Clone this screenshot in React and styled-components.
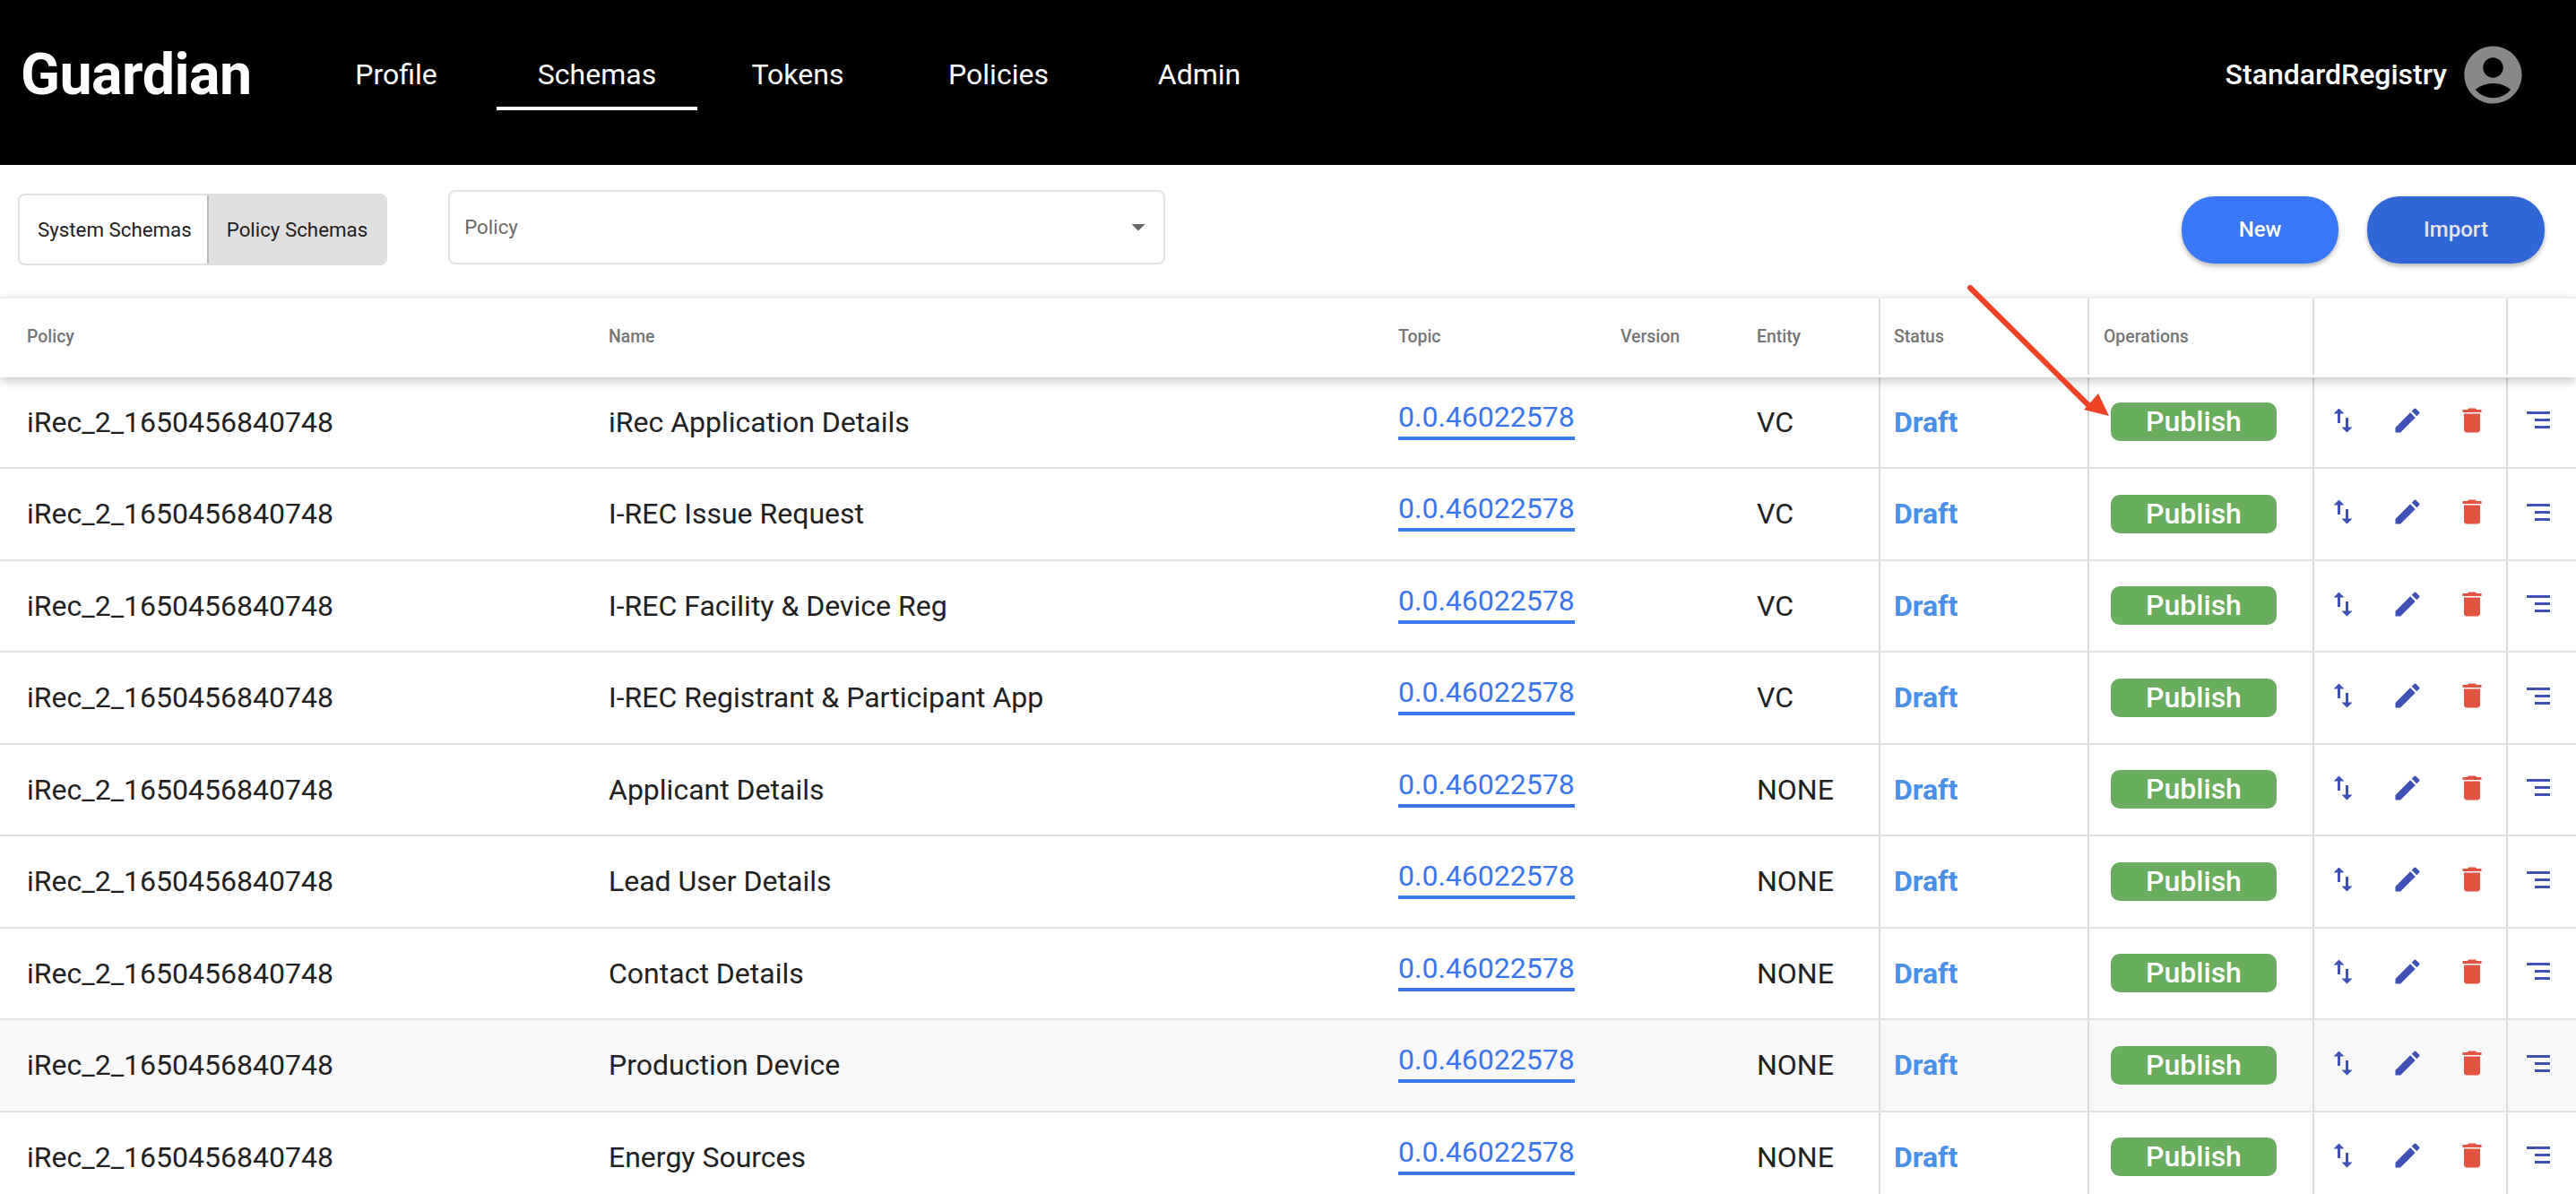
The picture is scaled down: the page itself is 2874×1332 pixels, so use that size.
import styled, { createGlobalStyle } from 'styled-components';
import { MdAccountCircle, MdArrowDropDown, MdDelete, MdEdit, MdSwapVert } from 'react-icons/md';

const columns = '649px 881px 248px 152px 166px 233px 251px 216px 78px';

const GlobalStyle = createGlobalStyle`
  html, body {
    height: 100%;
    margin: 0;
    overflow: hidden;
    background: #fff;
  }

  body {
    color: #212121;
    font-family: Roboto, "Liberation Sans", sans-serif;
  }

  * {
    box-sizing: border-box;
  }
`;

const Page = styled.div`
  height: 1332px;
  overflow: hidden;
  position: relative;
  width: 2874px;
`;

const Header = styled.header`
  align-items: center;
  background: #000;
  color: #fff;
  display: flex;
  height: 184px;
  padding: 0 54px 18px 23px;
`;

const Logo = styled.div`
  font-size: 64.5px;
  font-weight: 700;
  letter-spacing: -0.5px;
  width: 307px;
`;

const Nav = styled.nav`
  display: flex;
`;

const NavItem = styled.a`
  border-bottom: 4px solid ${({ $active }) => ($active ? '#fff' : 'transparent')};
  color: #fff;
  font-size: 32px;
  height: 76px;
  line-height: 72px;
  margin-top: 3px;
  text-align: center;
  width: 224px;
`;

const UserBox = styled.div`
  align-items: center;
  display: flex;
  font-size: 32px;
  font-weight: 500;
  gap: 13px;
  margin-left: auto;
`;

const Toolbar = styled.div`
  align-items: center;
  display: flex;
  height: 147px;
  padding: 0 35px 3px 20px;
`;

const ToggleGroup = styled.div`
  border: 2px solid #e0e0e0;
  border-radius: 8px;
  display: flex;
  height: 80px;
  overflow: hidden;
`;

const ToggleButton = styled.button`
  background: ${({ $active }) => ($active ? '#e0e0e0' : '#fff')};
  border: 0;
  border-left: ${({ $active }) => ($active ? '2px solid #bdbdbd' : '0')};
  color: #212121;
  font-family: inherit;
  font-size: 22.3px;
  padding: ${({ $active }) => ($active ? '0 20px' : '0 17px 0 20px')};
`;

const SelectBox = styled.div`
  align-items: center;
  border: 2px solid #e4e4e4;
  border-radius: 8px;
  color: #6b6b6b;
  display: flex;
  font-size: 22.3px;
  height: 83px;
  justify-content: space-between;
  margin: 0 0 5px 68px;
  padding: 0 10px 2px 16px;
  width: 800px;
`;

const Actions = styled.div`
  display: flex;
  gap: 32px;
  margin-left: auto;
`;

const PillButton = styled.button`
  background: ${({ $dark }) => ($dark ? '#3066d6' : '#3a77f6')};
  border: 0;
  border-radius: 36px;
  box-shadow: 0 3px 5px rgba(0, 0, 0, 0.28);
  color: ${({ $dark }) => ($dark ? '#e6e6e6' : '#fff')};
  font-family: inherit;
  font-size: 24px;
  font-weight: 500;
  height: 75px;
  width: ${({ $width }) => $width}px;
`;

const HeadRow = styled.div`
  border-top: 2px solid #eee;
  box-shadow: 0 4px 10px rgba(0, 0, 0, 0.22);
  color: #757575;
  display: grid;
  font-size: 19.4px;
  font-weight: 500;
  grid-template-columns: ${columns};
  height: 89.5px;
  padding-bottom: 3px;
  position: relative;
`;

const Row = styled.div`
  background: ${({ $hover }) => ($hover ? '#f8f8f8' : '#fff')};
  border-bottom: 2px solid #e2e2e2;
  display: grid;
  font-size: 32px;
  grid-template-columns: ${columns};
  height: 102.5px;
`;

const Cell = styled.div`
  align-items: center;
  border-left: ${({ $line }) => ($line ? '2px solid #dcdcdc' : '0')};
  display: flex;
  padding-left: ${({ $pad = 30 }) => $pad}px;
`;

const TopicLink = styled.a`
  border-bottom: 4px solid #3a76ee;
  color: #3a76ee;
  line-height: 43px;
  margin-top: -7px;
`;

const Draft = styled.span`
  color: #4a90e8;
  font-weight: 700;
`;

const PublishButton = styled.button`
  background: #69ae5e;
  border: 0;
  border-radius: 10px;
  color: #fff;
  font-family: inherit;
  font-size: 32px;
  font-weight: 500;
  height: 43px;
  line-height: 43px;
  padding: 0;
  width: 185px;
`;

const IconCell = styled(Cell)`
  gap: 8px;
  padding-bottom: 4px;
`;

const IconButton = styled.span`
  color: ${({ $danger }) => ($danger ? '#e25341' : '#3f51b5')};
  display: flex;
  justify-content: center;
  width: 64px;
`;

const Arrow = styled.svg`
  left: 2190px;
  pointer-events: none;
  position: absolute;
  top: 315px;
`;

const rows = [
  ['iRec Application Details', 'VC'],
  ['I-REC Issue Request', 'VC'],
  ['I-REC Facility & Device Reg', 'VC'],
  ['I-REC Registrant & Participant App', 'VC'],
  ['Applicant Details', 'NONE'],
  ['Lead User Details', 'NONE'],
  ['Contact Details', 'NONE'],
  ['Production Device', 'NONE'],
  ['Energy Sources', 'NONE'],
];

function MenuLines() {
  return (
    <svg width="26" height="19" viewBox="0 0 26 19" fill="currentColor" aria-hidden="true">
      <rect x="0" y="0" width="26" height="3" />
      <rect x="9" y="8" width="17" height="3" />
      <rect x="9" y="16" width="17" height="3" />
    </svg>
  );
}

export default function App() {
  return (
    <Page>
      <GlobalStyle />
      <Header>
        <Logo>Guardian</Logo>
        <Nav>
          <NavItem>Profile</NavItem>
          <NavItem $active>Schemas</NavItem>
          <NavItem>Tokens</NavItem>
          <NavItem>Policies</NavItem>
          <NavItem>Admin</NavItem>
        </Nav>
        <UserBox>
          StandardRegistry
          <MdAccountCircle size={77} color="#888" />
        </UserBox>
      </Header>

      <Toolbar>
        <ToggleGroup>
          <ToggleButton>System Schemas</ToggleButton>
          <ToggleButton $active>Policy Schemas</ToggleButton>
        </ToggleGroup>
        <SelectBox>
          Policy
          <MdArrowDropDown size={36} color="#666" />
        </SelectBox>
        <Actions>
          <PillButton $width={175}>New</PillButton>
          <PillButton $dark $width={198}>Import</PillButton>
        </Actions>
      </Toolbar>

      <HeadRow>
        <Cell>Policy</Cell>
        <Cell>Name</Cell>
        <Cell>Topic</Cell>
        <Cell>Version</Cell>
        <Cell>Entity</Cell>
        <Cell $line $pad={15}>Status</Cell>
        <Cell $line $pad={16}>Operations</Cell>
        <Cell $line />
        <Cell $line />
      </HeadRow>

      {rows.map(([name, entity], index) => (
        <Row key={name} $hover={index === 7}>
          <Cell>iRec_2_1650456840748</Cell>
          <Cell>{name}</Cell>
          <Cell><TopicLink>0.0.46022578</TopicLink></Cell>
          <Cell />
          <Cell>{entity}</Cell>
          <Cell $line $pad={15}><Draft>Draft</Draft></Cell>
          <Cell $line $pad={24}><PublishButton>Publish</PublishButton></Cell>
          <IconCell $line $pad={0}>
            <IconButton><MdSwapVert size={36} /></IconButton>
            <IconButton><MdEdit size={36} /></IconButton>
            <IconButton $danger><MdDelete size={36} /></IconButton>
          </IconCell>
          <IconCell $line $pad={2}>
            <IconButton><MenuLines /></IconButton>
          </IconCell>
        </Row>
      ))}

      <Arrow width="170" height="155" viewBox="0 0 170 155" aria-hidden="true">
        <path d="M8 6 L144 141" stroke="#ee4224" strokeWidth="6" strokeLinecap="round" />
        <path d="M163 149 L151 124 L135 142 Z" fill="#ee4224" />
      </Arrow>
    </Page>
  );
}
